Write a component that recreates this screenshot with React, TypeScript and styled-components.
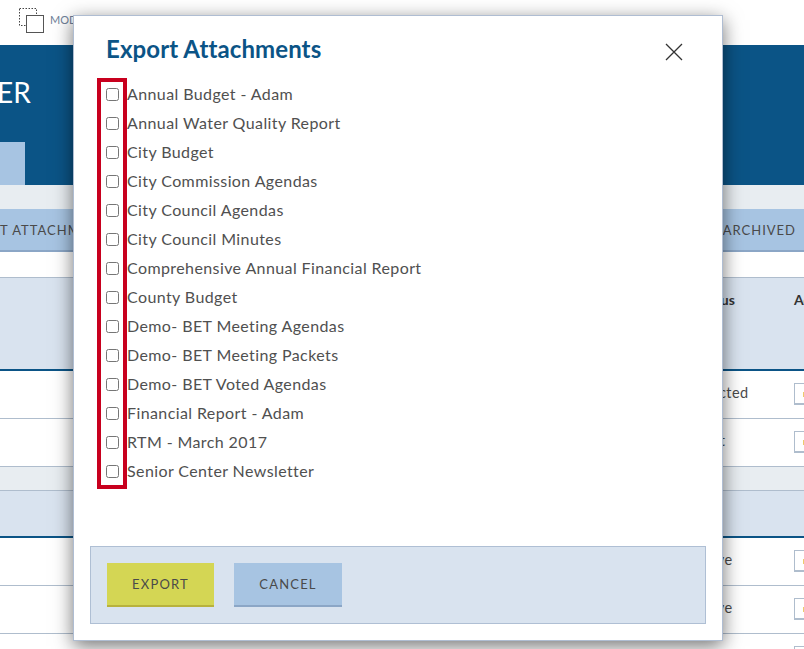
import styled, { createGlobalStyle } from "styled-components";

const GlobalStyle = createGlobalStyle`
  html, body {
    margin: 0;
    height: 100%;
    overflow: hidden;
    background: #fff;
    font-family: "Lato", "Open Sans", sans-serif;
  }
  * { box-sizing: border-box; }
`;

const Page = styled.div`
  width: 804px;
  height: 649px;
  overflow: hidden;
  position: relative;
`;

const TopBar = styled.header`
  height: 45px;
  display: flex;
  align-items: flex-start;
  padding: 8px 0 0 19px;
  gap: 6px;
`;

const ModeLabel = styled.span`
  font-size: 11px;
  line-height: 24px;
  color: #6f8199;
`;

const Banner = styled.section`
  height: 140px;
  background: #0b5486;
  display: flex;
  flex-direction: column;
  justify-content: space-between;
`;

const BannerTitle = styled.h1`
  margin: 0 0 0 -3px;
  padding-top: 27px;
  font-size: 28px;
  line-height: 40px;
  font-weight: 400;
  color: #fff;
`;

const BannerTab = styled.div`
  width: 25px;
  height: 43px;
  background: #a7c4e2;
`;

const Band = styled.div<{ $line?: boolean }>`
  height: 24px;
  background: #e8edf1;
  border-bottom: ${(p) => (p.$line ? "1px solid #afbdcd" : "0")};
`;

const ActionBar = styled.div`
  height: 43px;
  background: #a7c4e2;
  border-bottom: 2px solid #8ba6c6;
  display: flex;
  justify-content: space-between;
  align-items: center;
  padding-right: 8px;
  font-size: 13px;
  letter-spacing: 1px;
  color: #4a4a4a;
`;

const Gap = styled.div`
  height: 26px;
  border-bottom: 1px solid #afbdcd;
`;

const HeadRow = styled.div<{ $h: number }>`
  height: ${(p) => p.$h}px;
  background: #d9e3ef;
  border-bottom: 2px solid #0b5486;
  display: grid;
  grid-template-columns: 696px 98px 1fr;
  padding-top: 13px;
  font-size: 14px;
  font-weight: 700;
  color: #333;
`;

const Row = styled.div`
  height: 48px;
  border-bottom: 1px solid #afbdcd;
  display: grid;
  grid-template-columns: 690px 104px 1fr;
  align-items: start;
`;

const Status = styled.span`
  padding-top: 12px;
  font-size: 14.5px;
  line-height: 20px;
  letter-spacing: 0.4px;
  color: #4a4a4a;
`;

const Picker = styled.div`
  width: 30px;
  height: 22px;
  margin-top: 12px;
  border: 1px solid #afbdcd;
  border-bottom-width: 2px;
  background: #fff;
  padding: 8px 0 0 8px;

  &::before {
    content: "";
    display: block;
    width: 3px;
    height: 5px;
    background: #eccb6c;
  }
`;

const Modal = styled.div`
  position: absolute;
  left: 73px;
  top: 15px;
  width: 650px;
  height: 626px;
  background: #fff;
  border: 1px solid #afbdd2;
  box-shadow: 0 5px 18px rgba(0, 0, 0, 0.55);
  padding: 18px 16px 16px;
  display: flex;
  flex-direction: column;
`;

const ModalHead = styled.div`
  display: flex;
  justify-content: space-between;
  align-items: flex-start;
  padding: 0 23px 0 16px;
`;

const ModalTitle = styled.h2`
  margin: 0;
  font-size: 24px;
  line-height: 30px;
  font-weight: 700;
  letter-spacing: 0.1px;
  color: #0b5486;
`;

const CloseButton = styled.button`
  margin-top: 9px;
  width: 18px;
  height: 18px;
  padding: 0;
  border: 0;
  background: none;
  display: flex;
  color: #333;
`;

const List = styled.div`
  position: relative;
  flex: 1;
  margin: 16px 0 0 16px;
`;

const Frame = styled.div`
  position: absolute;
  left: -9px;
  top: -2px;
  width: 30px;
  height: 411px;
  border: 4px solid #c8001e;
  pointer-events: none;
`;

const Item = styled.label`
  display: flex;
  align-items: center;
  height: 29px;
`;

const ItemName = styled.span`
  padding-bottom: 2px;
  font-size: 16px;
  letter-spacing: 0.4px;
  color: #505050;
`;

const Check = styled.input.attrs({ type: "checkbox" })`
  width: 13px;
  height: 13px;
  margin: 0 8px 0 0;
  flex: none;
`;

const Footer = styled.div`
  height: 78px;
  background: #d9e3ef;
  border: 1px solid #afbfd4;
  padding: 16px;
  display: flex;
  gap: 20px;
`;

const Button = styled.button<{ $tone: "export" | "cancel" }>`
  width: ${(p) => (p.$tone === "export" ? "107px" : "108px")};
  height: 44px;
  padding: 0;
  border: 0;
  border-bottom: 2px solid ${(p) => (p.$tone === "export" ? "#b8b23c" : "#8ba6c6")};
  background: ${(p) => (p.$tone === "export" ? "#d4d654" : "#a7c4e2")};
  font-family: inherit;
  font-size: 13px;
  letter-spacing: 1.2px;
  color: #4a4a4a;
`;

const ITEMS = [
  "Annual Budget - Adam",
  "Annual Water Quality Report",
  "City Budget",
  "City Commission Agendas",
  "City Council Agendas",
  "City Council Minutes",
  "Comprehensive Annual Financial Report",
  "County Budget",
  "Demo- BET Meeting Agendas",
  "Demo- BET Meeting Packets",
  "Demo- BET Voted Agendas",
  "Financial Report - Adam",
  "RTM - March 2017",
  "Senior Center Newsletter",
];

function ModeIcon() {
  return (
    <svg width="25" height="25" viewBox="0 0 25 25" fill="none">
      <rect x="0.5" y="0.5" width="17" height="17" stroke="#444" strokeDasharray="1.5 1.5" />
      <rect x="7.5" y="7.5" width="17" height="17" fill="#fff" stroke="#555" />
    </svg>
  );
}

export default function App() {
  return (
    <Page>
      <GlobalStyle />
      <TopBar>
        <ModeIcon />
        <ModeLabel>MODE</ModeLabel>
      </TopBar>
      <Banner>
        <BannerTitle>ER</BannerTitle>
        <BannerTab />
      </Banner>
      <Band />
      <ActionBar>
        <span>T ATTACHMENTS</span>
        <span>ARCHIVED</span>
      </ActionBar>
      <Gap />
      <HeadRow $h={93}>
        <span />
        <span>Status</span>
        <span>Actions</span>
      </HeadRow>
      <Row>
        <span />
        <Status>Rejected</Status>
        <Picker />
      </Row>
      <Row>
        <span />
        <Status>Draft</Status>
        <Picker />
      </Row>
      <Band $line />
      <HeadRow $h={47} />
      <Row>
        <span />
        <Status>Active</Status>
        <Picker />
      </Row>
      <Row>
        <span />
        <Status>Active</Status>
        <Picker />
      </Row>
      <Row>
        <span />
        <Status>Active</Status>
        <Picker />
      </Row>

      <Modal>
        <ModalHead>
          <ModalTitle>Export Attachments</ModalTitle>
          <CloseButton aria-label="Close">
            <svg width="18" height="18" viewBox="0 0 18 18" fill="none" stroke="currentColor" strokeWidth="1.3">
              <path d="M1 1 17 17M17 1 1 17" />
            </svg>
          </CloseButton>
        </ModalHead>
        <List>
          <Frame />
          {ITEMS.map((name) => (
            <Item key={name}>
              <Check />
              <ItemName>{name}</ItemName>
            </Item>
          ))}
        </List>
        <Footer>
          <Button $tone="export">EXPORT</Button>
          <Button $tone="cancel">CANCEL</Button>
        </Footer>
      </Modal>
    </Page>
  );
}
